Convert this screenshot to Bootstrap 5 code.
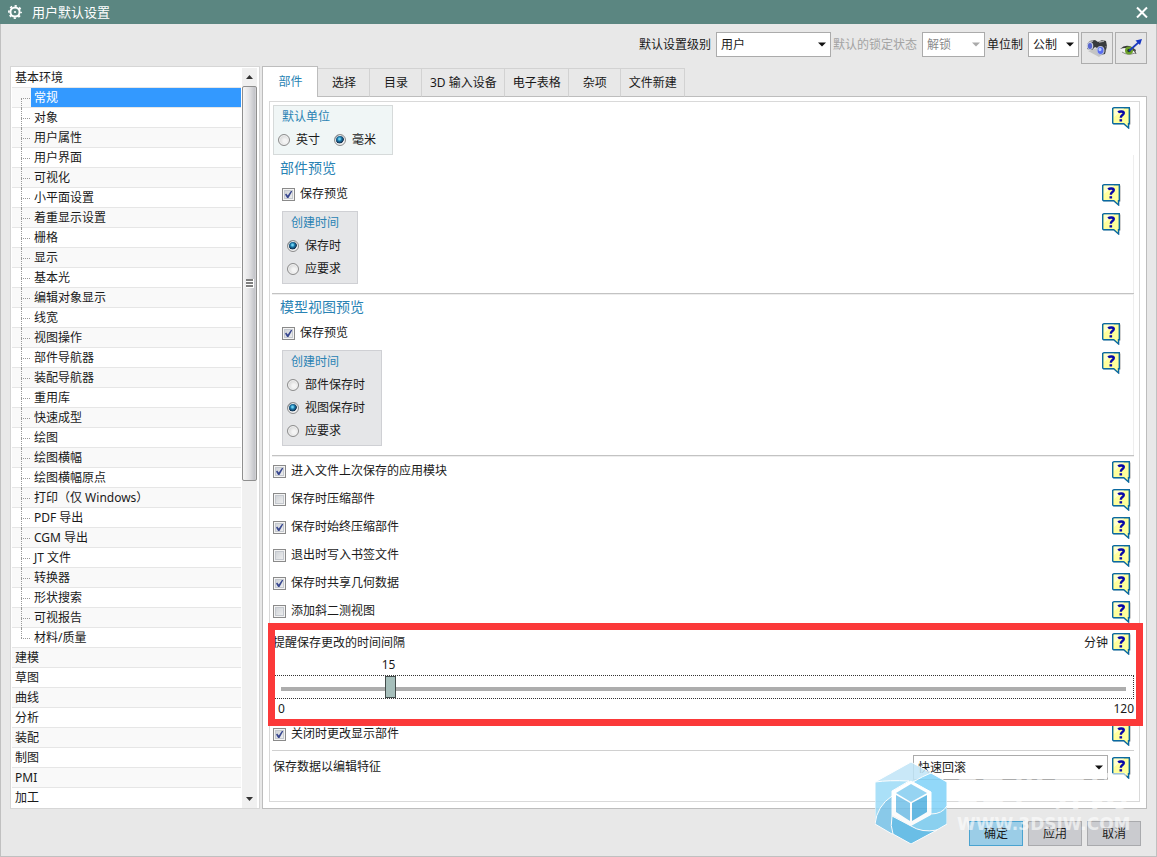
<!DOCTYPE html>
<html lang="zh-CN">
<head>
<meta charset="utf-8">
<meta name="viewport" content="width=device-width, initial-scale=1">
<title>用户默认设置</title>
<link href="https://cdn.jsdelivr.net/npm/bootstrap@5.3.0/dist/css/bootstrap.min.css" rel="stylesheet">
<style>
  body { font: 12px/20px "Noto Sans", "Noto Sans CJK SC", sans-serif; color: #1a1a1a; background: #e8e8e8; }
  .window { border: solid #c0c0c0; border-width: 0 1px 1px; }
  .titlebar { height: 24px; margin: 0 -1px; padding: 0 9px 0 8px; gap: 10px; background: #5b8681; color: #fff; }
  .titlebar h1 { font-size: 13px; line-height: 24px; font-weight: 400; }
  .plain-btn { border: 0; padding: 0; background: none; display: flex; }
  .toolbar { height: 42px; padding: 8px 9px 0; gap: 2px; }
  .toolbar label { line-height: 25px; padding-right: 3px; }
  .combo { height: 25px; padding: 0 16px 0 4px; line-height: 20px; font-size: 12px; color: #1a1a1a; border: 1px solid #ababab; border-radius: 0;
    background: #fff url("data:image/svg+xml,%3Csvg xmlns='http://www.w3.org/2000/svg' width='8' height='5'%3E%3Cpath d='M0 0.5h8L4 4.5z' fill='%23111'/%3E%3C/svg%3E") no-repeat right 4px center; background-size: 8px 5px; }
  .combo:disabled { color: #8a8a8a; background-color: #fff;
    background-image: url("data:image/svg+xml,%3Csvg xmlns='http://www.w3.org/2000/svg' width='8' height='5'%3E%3Cpath d='M0 0.5h8L4 4.5z' fill='%23aaa'/%3E%3C/svg%3E"); }
  .w-level { width: 115px; } .w-lock { width: 63px; } .w-unit { width: 51px; } .w-edit { width: 195px; }
  .tool-btn { width: 32px; height: 32px; padding: 0; border: 1px solid #adadad; background: #e6e6e6; }
  .muted-label { color: #a3a3a3; }

  .main-area { padding: 0 9px; gap: 2px; }
  .tree-pane { width: 250px; padding: 1px 1px 0; background: #fff; border: 1px solid #d6d6d6; }
  .tree-pane li { height: 20px; border-bottom: 1px solid #e6e6e6; padding-left: 3px; }
  .tree-pane li:last-child { border-bottom: 0; }
  .tree-pane li:nth-child(even) { background: #f9f9f9; }
  .tree-pane a { display: block; line-height: 19px; color: inherit; text-decoration: none; }
  .tree-pane li.kid { position: relative; padding-left: 19px; }
  .tree-pane .kid a { padding-left: 3px; }
  .tree-pane .kid a.current { background: #3399ff; color: #fff; }
  .kid::before { content: ""; position: absolute; left: 9px; top: 0; bottom: -1px; border-left: 1px dotted #999; }
  .kid::after { content: ""; position: absolute; left: 9px; width: 9px; top: 10px; border-top: 1px dotted #999; }
  .kid.first-kid::before { top: 10px; }
  .kid.last-kid::before { bottom: 9px; }
  .scroller { width: 15px; margin: 0 1px; background: #f0f0f0; }
  .scroller .arrow { height: 18px; }
  .scroller .thumb { flex: 56; border: 1px solid #8f8f8f; border-radius: 2px; background: linear-gradient(90deg, #f6f6f6, #e4e4e6 45%, #c3c4c9 90%, #d8d8da); }
  .scroller .rest { flex: 44; }

  .tabs { height: 31px; margin-bottom: -1px; position: relative; }
  .tabs .nav-link { height: 29px; min-width: 52px; padding: 0 7px 0 8px; line-height: 28px; color: #1a1a1a; border: 1px solid #d2d2d2; border-left-width: 0; border-bottom-color: #bdbdbd; border-radius: 0; background: #e8e8e8; }
  .tabs .nav-link.active { height: 31px; min-width: 56px; line-height: 30px; color: #2a83b4; background: #fff; border: 1px solid #bdbdbd; border-bottom: 0; }
  .tab-panel { background: #fff; border: 1px solid #bdbdbd; padding: 4px 6px 6px; }
  .options { border: 1px solid #d9d9d9; padding: 0 5px 0 2px; }
  .first-row { padding: 3px 2px 0 1px; }
  .blue-title { color: #2a83b4; font-size: 14px; line-height: 26px; font-weight: 400; }
  .preview { padding: 0 12px 9px 10px; border-bottom: 1px solid #c3c3c3; box-shadow: 0 1px #eee, inset -1px 0 #eee; }
  .preview-last { margin-bottom: 1px; }
  .preview .blue-title { margin: 0 0 0 -2px; }
  .check-row { height: 28px; padding: 0 2px 0 1px; }
  .preview .check-row { height: 26px; padding: 0; }
  .preview .group-row { margin-top: 4px; }
  .group { border: 1px solid #cfd0d4; background: #e5e6e8; padding: 0 16px 3px 4px; }
  .group.tinted { background: #f0f6f6; border-color: #d6dada; }
  .group legend { font-size: 12px; line-height: 22px; color: #2a83b4; padding-left: 4px; }
  .group label { line-height: 23px; }
  .check-gap { gap: 5px; } .radio-gap { gap: 6px; } .unit-gap { gap: 14px; }
  input[type=checkbox], input[type=radio] { appearance: none; flex: none; margin: 0; }
  input[type=checkbox] { width: 13px; height: 13px; border: 1px solid #8a8a8a; background: linear-gradient(135deg, #c9cdd2, #f4f4f4); box-shadow: inset 0 0 0 1px #f4f4f4, inset 0 0 0 2px #c4c8ce; }
  input[type=checkbox]:checked { background: url("data:image/svg+xml,%3Csvg xmlns='http://www.w3.org/2000/svg' viewBox='0 0 11 11'%3E%3Cpath d='M2 5.5l1.2-1 1.6 2L8.4 1.2h1.4L5.2 9.4h-.8z' fill='%2338478f'/%3E%3C/svg%3E"), linear-gradient(135deg, #c9cdd2, #f4f4f4); }
  input[type=radio] { width: 12px; height: 12px; border: 1px solid #8c8c8c; border-radius: 50%; background: radial-gradient(circle at 60% 60%, #f4f4f4 20%, #c4c4c4); box-shadow: inset 0 0 0 1px #f2f2f2; }
  input[type=radio]:checked { background: radial-gradient(circle at 45% 40%, #6fd0f0 0 10%, #1b7cae 25%, #12304f 50%, #e8eaec 58%); }
  .help { width: 20px; height: 24px; flex: none; }

  .interval { padding-top: 4px; position: relative; }
  .interval::after { content: ""; position: absolute; inset: -2px -9px -6px -4px; border: 7px solid #fb3939; pointer-events: none; z-index: 2; }
  .value-row { height: 18px; line-height: 16px; padding: 0 14px 0 12px; }
  .value-row output { display: block; width: 16px; transform: translateX(-50%); text-align: center; }
  .slider-frame { height: 24px; padding: 0 7px 0 8px; border: 1px dotted #333; }
  .slider-frame input { appearance: none; display: block; width: 100%; height: 22px; margin: 0; background: linear-gradient(#adadad, #adadad) no-repeat center 11px / 100% 4px; }
  .slider-frame input::-webkit-slider-thumb { appearance: none; width: 11px; height: 22px; background: #a6bfbb; border: 1px solid #444d4c; border-radius: 0; }
  .slider-frame input::-moz-range-thumb { width: 9px; height: 20px; background: #a6bfbb; border: 1px solid #444d4c; border-radius: 0; }
  .scale-row { height: 21px; padding-left: 6px; }
  .edit-row { margin-top: 2px; padding: 4px 2px 16px 1px; border-top: 1px solid #d0d0d0; }
  .edit-row label { line-height: 24px; }
  .footer-bar { height: 47px; padding: 12px 15px 0; gap: 5px; }
  .dlg-btn { width: 54px; height: 25px; padding: 0; font-size: 12px; color: #1a1a1a; border: 1px solid #a9aaad; border-radius: 0; background: #cacbcf; }
  .dlg-btn.default { background: #9bcde7; border-color: #4aa3d0; }

  .watermark { position: absolute; right: 23px; bottom: 12px; pointer-events: none; z-index: 3; color: #fff; gap: 10px; }
  .wm-name { font: 700 40px/48px "Noto Sans", "Noto Sans CJK SC", sans-serif; opacity: .6; white-space: nowrap; }
  .wm-url { font: 700 17px/20px "DejaVu Sans", sans-serif; opacity: .6; }
  .wm-text { width: 176px; padding-top: 4px; }
</style>
</head>
<body>
<svg width="0" height="0" class="position-absolute" aria-hidden="true">
  <symbol id="q" viewBox="0 0 20 24">
    <path d="M2 3.500h17v16h-1.500v4.500l-6-4.500H2z" fill="#999" opacity=".45"/>
    <path d="M2 2.700h15.300v16H16.500v4.200l-4.700-4.200H1.500l-.8-.8V3.500z" fill="#ffff9c" stroke="#0a69a0" stroke-width="1.400"/>
    <path d="M2.200 3.600h10L2.200 12z" fill="#fff" opacity=".55"/>
    <path d="M6.200 7.400c1.300-1.300 5.600-1.500 5.600.7 0 2-3 2-3 4.600" fill="none" stroke="#0808a8" stroke-width="2.400"/>
    <path d="M7.500 14.200h2.600v2.300H7.500z" fill="#0808a8"/>
  </symbol>
</svg>
<div class="window min-vh-100 d-flex flex-column position-relative">
  <header class="titlebar d-flex align-items-center">
    <svg width="14" height="14" viewBox="0 0 14 14" aria-hidden="true"><g fill="none" stroke="#fff"><circle cx="7" cy="7" r="4.600" stroke-width="2"/><circle cx="7" cy="7" r="6.100" stroke-width="1.700" stroke-dasharray="2.200 2.590" stroke-dashoffset="1.100"/></g><circle cx="7" cy="7" r="1.100" fill="#fff"/></svg>
    <h1 class="m-0 flex-grow-1">用户默认设置</h1>
    <button class="plain-btn" aria-label="关闭"><svg width="12" height="12" viewBox="0 0 12 12"><path d="M1 1.500l10 10M11 1.500l-10 10" stroke="#fff" stroke-width="2"/></svg></button>
  </header>

  <div class="toolbar d-flex justify-content-end align-items-start">
    <label for="level">默认设置级别</label>
    <select id="level" class="form-select combo w-level"><option>用户</option></select>
    <label for="lock" class="muted-label">默认的锁定状态</label>
    <select id="lock" class="form-select combo w-lock" disabled><option>解锁</option></select>
    <label for="unit">单位制</label>
    <select id="unit" class="form-select combo w-unit"><option>公制</option></select>
    <button class="tool-btn" aria-label="查找默认设置">
      <svg width="24" height="22" viewBox="0 0 24 22"><path d="M3 14l11 6 6-4-8-5z" fill="#c4c4c4"/><path d="M2 7l3-3 5-1 3 2 4-2 4 1 1 5-2 8-5 1-3-7-2-1-3 3-5-1z" fill="#383b3d"/><path d="M4 5l4-1M14 5l5-1" stroke="#aaa" stroke-width="1.500"/><ellipse cx="5" cy="9" rx="2.700" ry="3.500" fill="#5866cf" stroke="#c8cedd" stroke-width="1.200"/><ellipse cx="15.500" cy="13.500" rx="3.500" ry="4" fill="#586cf0" stroke="#b9c1d9" stroke-width="1.200"/><ellipse cx="15" cy="12.500" rx="1.500" ry="1.800" fill="#b8cbff"/><path d="M20 10l2-1M19 14l2-1" stroke="#777"/></svg>
    </button>
    <button class="tool-btn" aria-label="管理当前设置">
      <svg width="24" height="22" viewBox="0 0 24 22"><path d="M1 12q8-6 17 2l-3 3q-6 2-12-2z" fill="#f3f3f3"/><path d="M1 12q7-7 16 1l-1 2q-7-6-15-3z" fill="#37393b"/><path d="M3 15q6 4 13 1" fill="none" stroke="#888"/><circle cx="10" cy="13.500" r="4" fill="#6ca12c"/><circle cx="10" cy="13.500" r="1.700" fill="#263b18"/><path d="M10 14L20 5" stroke="#1c3cbc" stroke-width="1.700"/><path d="M16.500 3.500L23 2l-2 6z" fill="#1737c4"/><path d="M15 12l2 5" stroke="#555"/></svg>
    </button>
  </div>

  <main class="main-area d-flex flex-grow-1">
    <nav class="tree-pane d-flex flex-shrink-0" aria-label="类别">
      <ul class="list-unstyled m-0 flex-grow-1">
        <li><a href="#">基本环境</a></li>
        <li class="kid first-kid"><a href="#" class="current" aria-current="page">常规</a></li>
        <li class="kid"><a href="#">对象</a></li>
        <li class="kid"><a href="#">用户属性</a></li>
        <li class="kid"><a href="#">用户界面</a></li>
        <li class="kid"><a href="#">可视化</a></li>
        <li class="kid"><a href="#">小平面设置</a></li>
        <li class="kid"><a href="#">着重显示设置</a></li>
        <li class="kid"><a href="#">栅格</a></li>
        <li class="kid"><a href="#">显示</a></li>
        <li class="kid"><a href="#">基本光</a></li>
        <li class="kid"><a href="#">编辑对象显示</a></li>
        <li class="kid"><a href="#">线宽</a></li>
        <li class="kid"><a href="#">视图操作</a></li>
        <li class="kid"><a href="#">部件导航器</a></li>
        <li class="kid"><a href="#">装配导航器</a></li>
        <li class="kid"><a href="#">重用库</a></li>
        <li class="kid"><a href="#">快速成型</a></li>
        <li class="kid"><a href="#">绘图</a></li>
        <li class="kid"><a href="#">绘图横幅</a></li>
        <li class="kid"><a href="#">绘图横幅原点</a></li>
        <li class="kid"><a href="#">打印（仅 Windows）</a></li>
        <li class="kid"><a href="#">PDF 导出</a></li>
        <li class="kid"><a href="#">CGM 导出</a></li>
        <li class="kid"><a href="#">JT 文件</a></li>
        <li class="kid"><a href="#">转换器</a></li>
        <li class="kid"><a href="#">形状搜索</a></li>
        <li class="kid"><a href="#">可视报告</a></li>
        <li class="kid last-kid"><a href="#">材料/质量</a></li>
        <li><a href="#">建模</a></li>
        <li><a href="#">草图</a></li>
        <li><a href="#">曲线</a></li>
        <li><a href="#">分析</a></li>
        <li><a href="#">装配</a></li>
        <li><a href="#">制图</a></li>
        <li><a href="#">PMI</a></li>
        <li><a href="#">加工</a></li>
      </ul>
      <div class="scroller d-flex flex-column" aria-hidden="true">
        <div class="arrow d-flex align-items-center justify-content-center"><svg width="7" height="4" viewBox="0 0 7 4"><path d="M0 4l3.500-4L7 4z" fill="#333"/></svg></div>
        <div class="thumb d-flex align-items-center justify-content-center"><svg width="8" height="9" viewBox="0 0 8 9"><path d="M0 1.500h8M0 4.500h8M0 7.500h8" stroke="#fff" stroke-width="3"/><path d="M0 1h7M0 4h7M0 7h7" stroke="#555" stroke-width="1.500"/></svg></div>
        <div class="rest"></div>
        <div class="arrow d-flex align-items-center justify-content-center"><svg width="7" height="4" viewBox="0 0 7 4"><path d="M0 0h7L3.500 4z" fill="#333"/></svg></div>
      </div>
    </nav>

    <section class="flex-grow-1 d-flex flex-column">
      <div class="tabs nav align-items-end flex-nowrap" role="tablist">
        <button class="nav-link active" role="tab" aria-selected="true">部件</button>
        <button class="nav-link" role="tab">选择</button>
        <button class="nav-link" role="tab">目录</button>
        <button class="nav-link" role="tab">3D 输入设备</button>
        <button class="nav-link" role="tab">电子表格</button>
        <button class="nav-link" role="tab">杂项</button>
        <button class="nav-link" role="tab">文件新建</button>
      </div>
      <div class="tab-panel flex-grow-1 d-flex flex-column">
        <form class="options flex-grow-1">
          <div class="first-row d-flex justify-content-between align-items-start">
            <fieldset class="group tinted d-flex flex-column">
              <legend class="m-0">默认单位</legend>
              <div class="d-flex unit-gap">
                <label class="d-flex align-items-center radio-gap"><input type="radio" name="units">英寸</label>
                <label class="d-flex align-items-center radio-gap"><input type="radio" name="units" checked>毫米</label>
              </div>
            </fieldset>
            <button type="button" class="plain-btn" aria-label="帮助"><svg class="help"><use href="#q"/></svg></button>
          </div>

          <section class="preview">
            <h2 class="blue-title">部件预览</h2>
            <div class="check-row d-flex justify-content-between align-items-center">
              <label class="d-flex align-items-center check-gap"><input type="checkbox" checked>保存预览</label>
              <button type="button" class="plain-btn" aria-label="帮助"><svg class="help"><use href="#q"/></svg></button>
            </div>
            <div class="group-row d-flex justify-content-between align-items-start">
              <fieldset class="group d-flex flex-column">
                <legend class="m-0">创建时间</legend>
                <label class="d-flex align-items-center radio-gap"><input type="radio" name="part-time" checked>保存时</label>
                <label class="d-flex align-items-center radio-gap"><input type="radio" name="part-time">应要求</label>
              </fieldset>
              <button type="button" class="plain-btn" aria-label="帮助"><svg class="help"><use href="#q"/></svg></button>
            </div>
          </section>

          <section class="preview preview-last">
            <h2 class="blue-title">模型视图预览</h2>
            <div class="check-row d-flex justify-content-between align-items-center">
              <label class="d-flex align-items-center check-gap"><input type="checkbox" checked>保存预览</label>
              <button type="button" class="plain-btn" aria-label="帮助"><svg class="help"><use href="#q"/></svg></button>
            </div>
            <div class="group-row d-flex justify-content-between align-items-start">
              <fieldset class="group d-flex flex-column">
                <legend class="m-0">创建时间</legend>
                <label class="d-flex align-items-center radio-gap"><input type="radio" name="view-time">部件保存时</label>
                <label class="d-flex align-items-center radio-gap"><input type="radio" name="view-time" checked>视图保存时</label>
                <label class="d-flex align-items-center radio-gap"><input type="radio" name="view-time">应要求</label>
              </fieldset>
              <button type="button" class="plain-btn" aria-label="帮助"><svg class="help"><use href="#q"/></svg></button>
            </div>
          </section>

          <div class="check-row d-flex justify-content-between align-items-center">
            <label class="d-flex align-items-center check-gap"><input type="checkbox" checked>进入文件上次保存的应用模块</label>
            <button type="button" class="plain-btn" aria-label="帮助"><svg class="help"><use href="#q"/></svg></button>
          </div>
          <div class="check-row d-flex justify-content-between align-items-center">
            <label class="d-flex align-items-center check-gap"><input type="checkbox">保存时压缩部件</label>
            <button type="button" class="plain-btn" aria-label="帮助"><svg class="help"><use href="#q"/></svg></button>
          </div>
          <div class="check-row d-flex justify-content-between align-items-center">
            <label class="d-flex align-items-center check-gap"><input type="checkbox" checked>保存时始终压缩部件</label>
            <button type="button" class="plain-btn" aria-label="帮助"><svg class="help"><use href="#q"/></svg></button>
          </div>
          <div class="check-row d-flex justify-content-between align-items-center">
            <label class="d-flex align-items-center check-gap"><input type="checkbox">退出时写入书签文件</label>
            <button type="button" class="plain-btn" aria-label="帮助"><svg class="help"><use href="#q"/></svg></button>
          </div>
          <div class="check-row d-flex justify-content-between align-items-center">
            <label class="d-flex align-items-center check-gap"><input type="checkbox" checked>保存时共享几何数据</label>
            <button type="button" class="plain-btn" aria-label="帮助"><svg class="help"><use href="#q"/></svg></button>
          </div>
          <div class="check-row d-flex justify-content-between align-items-center">
            <label class="d-flex align-items-center check-gap"><input type="checkbox">添加斜二测视图</label>
            <button type="button" class="plain-btn" aria-label="帮助"><svg class="help"><use href="#q"/></svg></button>
          </div>

          <div class="interval">
            <div class="check-row d-flex align-items-center">
              <label for="interval" class="flex-grow-1">提醒保存更改的时间间隔</label>
              <span class="me-1">分钟</span>
              <button type="button" class="plain-btn" aria-label="帮助"><svg class="help"><use href="#q"/></svg></button>
            </div>
            <div class="value-row"><output for="interval" style="margin-left:12.5%">15</output></div>
            <div class="slider-frame"><input id="interval" type="range" min="0" max="120" value="15"></div>
            <div class="scale-row d-flex justify-content-between"><span>0</span><span>120</span></div>
          </div>

          <div class="check-row d-flex justify-content-between align-items-center">
            <label class="d-flex align-items-center check-gap"><input type="checkbox" checked>关闭时更改显示部件</label>
            <button type="button" class="plain-btn" aria-label="帮助"><svg class="help"><use href="#q"/></svg></button>
          </div>
          <div class="edit-row d-flex align-items-start">
            <label for="edit" class="flex-grow-1">保存数据以编辑特征</label>
            <select id="edit" class="form-select combo w-edit me-1"><option>快速回滚</option></select>
            <button type="button" class="plain-btn" aria-label="帮助"><svg class="help"><use href="#q"/></svg></button>
          </div>
        </form>
      </div>
    </section>
  </main>

  <footer class="footer-bar d-flex justify-content-end align-items-start">
    <button class="btn dlg-btn default">确定</button>
    <button class="btn dlg-btn">应用</button>
    <button class="btn dlg-btn">取消</button>
  </footer>

  <div class="watermark d-flex">
    <svg width="72" height="82" viewBox="0 0 72 82" opacity=".85" aria-hidden="true">
      <g stroke="#fff" stroke-width="1">
        <path d="M36 0L56 11Q57 22 52 30L36 19 20 28Q7 21 0 20z" fill="#c0e5f7"/>
        <path d="M0 20Q14 18 34 19L17 29V36Q4 46 0 62z" fill="#9cdbf7"/>
        <path d="M56 11L72 20V44Q68 56 56 63V30L38 20Q48 14 56 11z" fill="#80d2f8"/>
        <path d="M0 62Q2 44 17 34V54L34 64Q24 69 17 72z" fill="#79c4ea"/>
        <path d="M72 44V62L60 69Q46 71 34 64L56 52Q67 52 72 44z" fill="#7accf1"/>
        <path d="M17 54L36 64Q47 71 62 68L36 82 18 72Q15 64 17 54z" fill="#55b7e6"/>
      </g>
      <path d="M36 19L56 30v23L36 64 17 53V30z" fill="#fff"/>
      <path d="M36 22L52 31 36 40 21 31z" fill="#84cdf0"/><path d="M21 33l14 8v18L21 50z" fill="#72c0e8"/><path d="M52 33l-15 8v18l15-9z" fill="#4fb0e0"/>
    </svg>
    <div class="wm-text"><div class="wm-name">3D世界网</div><div class="wm-url">WWW.3DSJW.COM</div></div>
  </div>
</div>
<script src="https://cdn.jsdelivr.net/npm/bootstrap@5.3.0/dist/js/bootstrap.bundle.min.js"></script>
</body>
</html>
